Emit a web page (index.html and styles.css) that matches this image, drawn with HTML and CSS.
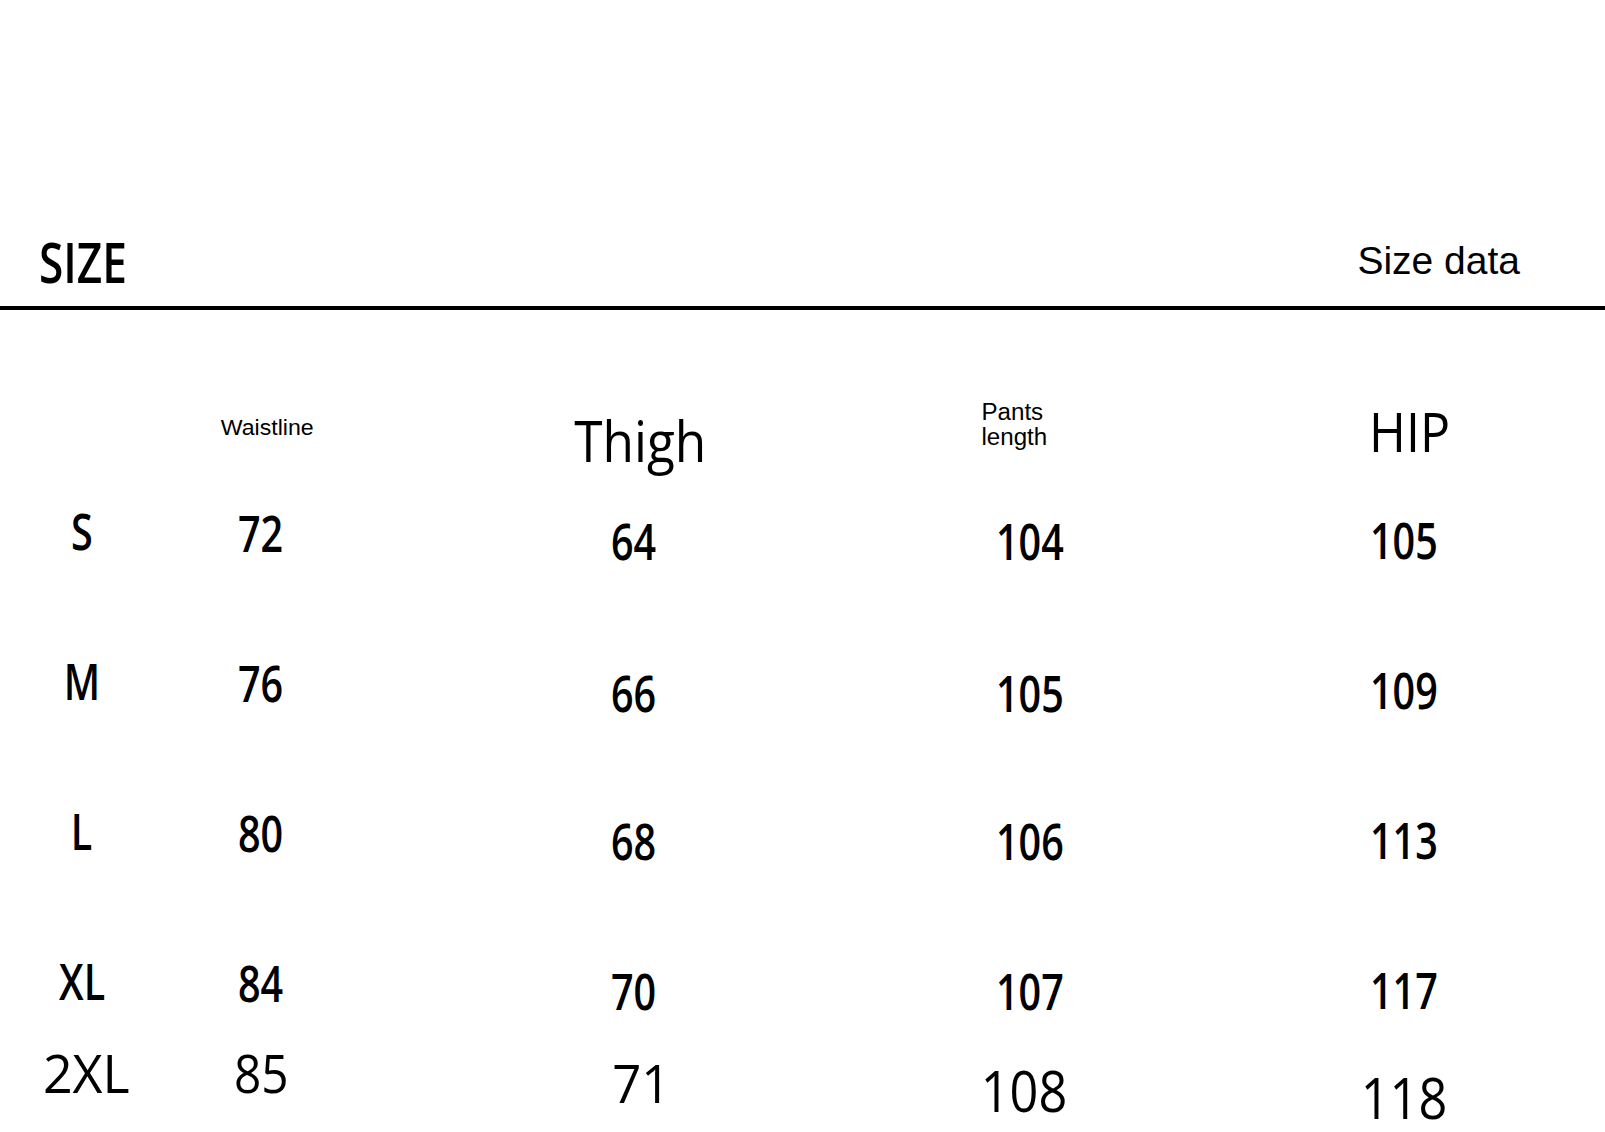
FILE: index.html
```html
<!DOCTYPE html>
<html lang="en">
<head>
<meta charset="utf-8">
<title>Size chart</title>
<link rel="stylesheet" href="styles.css">
</head>
<body>
<div class="page">
  <header class="head">
    <span class="title"><span class="cond">SIZE</span></span>
    <span class="data">Size data</span>
  </header>

  <section class="table">
    <div class="row hrow">
      <div class="cell"></div>
      <div class="cell h-waist"><span class="small">Waistline</span></div>
      <div class="cell h-thigh"><span class="big">Thigh</span></div>
      <div class="cell h-pants"><span class="small two">Pants<br>length</span></div>
      <div class="cell c5 h-hip"><span class="big hip">HIP</span></div>
    </div>

    <div class="row">
      <div class="cell sz"><span class="n">S</span></div>
      <div class="cell w"><span class="n">72</span></div>
      <div class="cell t"><span class="n">64</span></div>
      <div class="cell p"><span class="n">104</span></div>
      <div class="cell c5 hp"><span class="n">105</span></div>
    </div>
    <div class="row">
      <div class="cell sz"><span class="n">M</span></div>
      <div class="cell w"><span class="n">76</span></div>
      <div class="cell t t2"><span class="n">66</span></div>
      <div class="cell p p2"><span class="n">105</span></div>
      <div class="cell c5 hp"><span class="n">109</span></div>
    </div>
    <div class="row">
      <div class="cell sz"><span class="n">L</span></div>
      <div class="cell w"><span class="n">80</span></div>
      <div class="cell t"><span class="n">68</span></div>
      <div class="cell p"><span class="n">106</span></div>
      <div class="cell c5 hp"><span class="n">113</span></div>
    </div>
    <div class="row last4">
      <div class="cell sz"><span class="n">XL</span></div>
      <div class="cell w"><span class="n">84</span></div>
      <div class="cell t"><span class="n">70</span></div>
      <div class="cell p"><span class="n">107</span></div>
      <div class="cell c5 hp"><span class="n">117</span></div>
    </div>
    <div class="row row5">
      <div class="cell sz5"><span class="m wide">2XL</span></div>
      <div class="cell w5"><span class="m">85</span></div>
      <div class="cell t5"><span class="m seventyone">71</span></div>
      <div class="cell p5"><span class="m">108</span></div>
      <div class="cell c5 hp5"><span class="m">118</span></div>
    </div>
  </section>
</div>
</body>
</html>
```

FILE: styles.css
```css
html, body {
  margin: 0;
  padding: 0;
  background: #fff;
  color: #000;
}

.page {
  width: 1605px;
}

/* header */
.head {
  box-sizing: border-box;
  height: 310px;
  padding: 233px 85px 0 39px;
  border-bottom: 4px solid #000;
  display: flex;
  justify-content: space-between;
  align-items: flex-start;
}

.title {
  font-family: "Open Sans", sans-serif;
  font-weight: 600;
  font-size: 56px;
  line-height: 1;
}

.title .cond {
  display: inline-block;
  transform: scaleX(.79);
  transform-origin: 0 0;
}

.data {
  margin-top: 8px;
  font-family: "Liberation Sans", Arial, sans-serif;
  font-size: 39px;
  line-height: 1;
}

/* table */
.table {
  margin-top: 90px;
}

.row {
  display: grid;
  grid-template-columns: 164px 194px 552px 240px 1fr;
  height: 150px;
  font-family: "Open Sans", sans-serif;
  align-items: start;
}

.hrow { height: 106px; }
.row.last4 { height: 90px; }
.row.row5 { height: 80px; }

.cell {
  text-align: center;
  line-height: 1;
}

.c5 {
  padding-left: 54px;
  padding-right: 1px;
}

.n {
  display: inline-block;
  font-size: 50px;
  font-weight: 600;
  transform: scaleX(.79);
}

.w { margin-top: 2px; }
.t { margin-top: 10px; }
.t2 { margin-top: 12px; }
.p { margin-top: 10px; }
.p2 { margin-top: 12px; }
.hp { margin-top: 9px; }

/* header labels */
.small {
  display: inline-block;
  font-family: "Liberation Sans", Arial, sans-serif;
  font-size: 22px;
  text-align: left;
  transform: scaleX(1.05);
}

.two {
  font-size: 23px;
  line-height: 25px;
}

.big {
  display: inline-block;
  font-family: "Open Sans", sans-serif;
  font-size: 57px;
  transform: scaleX(.9);
}

.big.hip {
  font-size: 55px;
  transform: scaleX(.91);
}

.h-waist { margin-top: 17px; padding-left: 12px; }
.h-thigh { margin-top: 12px; padding-left: 12px; }
.h-pants { margin-top: 0; padding-right: 32px; }
.h-hip { margin-top: 3px; padding-left: 64px; }

/* last row */
.m {
  display: inline-block;
  font-size: 53px;
  font-weight: 400;
  transform: scaleX(.9);
}

.m.wide { transform: scaleX(.98); }
.m.seventyone { transform: scaleX(.96); }

.sz5 { padding-left: 8px; }
.w5 { margin-top: 0; }
.t5 { margin-top: 10px; padding-left: 14px; }
.p5 { margin-top: 16px; padding-right: 12px; }
.hp5 { margin-top: 23px; }
.hp5 .m { font-size: 56px; }
.p5 .m { font-size: 56px; }
```
